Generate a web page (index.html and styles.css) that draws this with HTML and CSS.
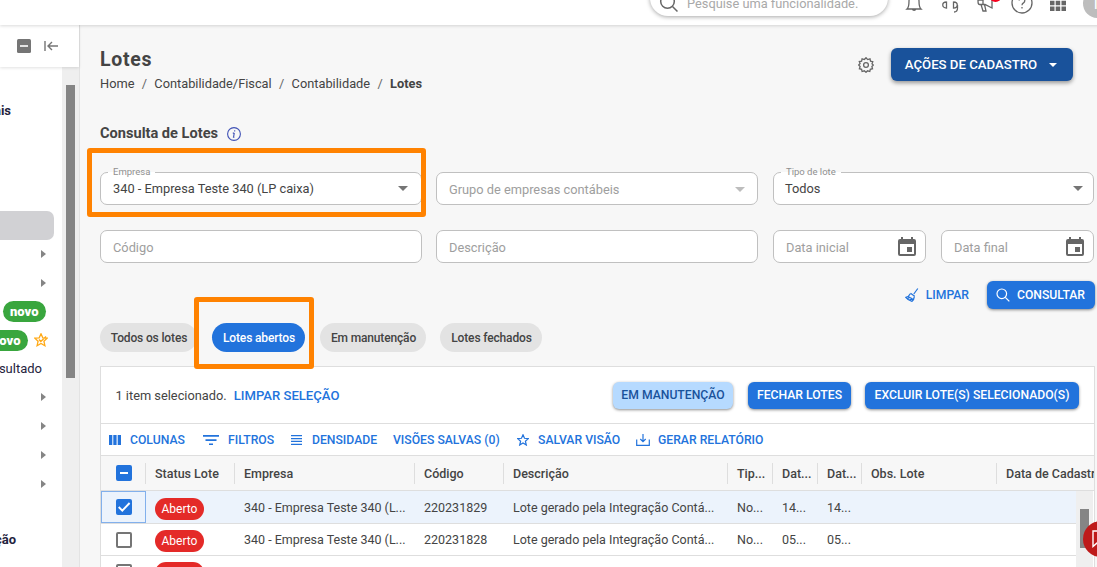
FILE: index.html
```html
<!DOCTYPE html>
<html lang="pt-BR">
  <head>
    <meta charset="UTF-8" />
    <meta name="viewport" content="width=device-width, initial-scale=1.0" />
    <title>Lotes</title>
    <link rel="stylesheet" href="styles.css">
  </head>

  <body>
    <header class="topbar">
      <div class="search">
        <svg width="20" height="20" viewBox="0 0 20 20"><circle cx="8.5" cy="8.5" r="6.8" /><path d="M13.5 13.5L18.5 18.5" /></svg>
        <span>Pesquise uma funcionalidade.</span>
      </div>
      <div class="top-icons">
        <svg width="18" height="20" viewBox="0 0 18 20"><path d="M2 16C3.800 14.500 4 12 4 8a5 5 0 0 1 10 0c0 4 .2 6.500 2 8zM7.300 16a1.900 1.900 0 0 0 3.600 0" /></svg>
        <svg width="18" height="20" viewBox="0 0 18 20"><path d="M1.500 5a7.500 7.500 0 0 1 15 0M5.500 8.500v6.500c-5 0-5-6 0-6M12.500 8.500v6.500c5 0 5-6 0-6M16.500 12v3c0 2.500-1 4-3.500 4" /></svg>
        <svg class="megaphone" width="20" height="20" viewBox="0 0 20 20"><path d="M2 7h5l9-5v13l-7-3.500H3.500C2 11.500 2 10 2 7zM7 7v4.500M5 11.500l2 6.500h3l-1.500-6.500" /><circle class="dot" cx="19.500" cy="3" r="6" /></svg>
        <svg width="22" height="22" viewBox="0 0 22 22"><circle cx="11" cy="11" r="10" /><path d="M8.200 8.500a2.800 2.800 0 1 1 4.300 2.400c-1 .6-1.500 1.200-1.500 2.300M11 15v1.600" /></svg>
        <svg class="filled" width="16" height="16" viewBox="0 0 16 16"><path d="M0 0h4.500v4.500H0zM5.700 0h4.500v4.500H5.700zM11.500 0H16v4.500h-4.500zM0 5.700h4.500v4.500H0zM5.700 5.700h4.500v4.500H5.700zM11.500 5.700H16v4.500h-4.500zM0 11.500h4.500V16H0zM5.700 11.500h4.500V16H5.700zM11.500 11.500H16V16h-4.500z" /></svg>
      </div>
      <div class="avatar">T</div>
    </header>

    <div class="layout">
      <aside class="sidebar">
        <div class="side-head">
          <svg width="14" height="14" viewBox="0 0 14 14"><rect width="14" height="14" rx="1.500" fill="#757575" /><path d="M3 7h8" stroke="#fff" stroke-width="1.600" /></svg>
          <svg width="14" height="10" viewBox="0 0 14 10"><path d="M1 0v10M14 5H4.500M8 1L4 5l4 4" fill="none" stroke="#757575" stroke-width="1.400" /></svg>
        </div>
        <div class="side-body">
          <div class="menu">
            <div class="group first">Principais</div>
            <div class="row selected"></div>
            <div class="row"><i class="arrow"></i></div>
            <div class="row"><i class="arrow"></i></div>
            <div class="row"><span class="new">novo</span></div>
            <div class="row starred">
              <span class="new">novo</span>
              <svg width="14" height="14" viewBox="0 0 14 14"><path d="M7 .8l1.800 4 4.400.4-3.300 3 1 4.500L7 10.500l-3.900 2.200 1-4.500-3.300-3 4.400-.4zM5 6.500l1.800 2L12 3.500" fill="none" stroke="#ffa916" stroke-width="1.300" /></svg>
            </div>
            <div class="row text">Resultado</div>
            <div class="row"><i class="arrow"></i></div>
            <div class="row"><i class="arrow"></i></div>
            <div class="row"><i class="arrow"></i></div>
            <div class="row"><i class="arrow"></i></div>
            <div class="group last">Produção</div>
          </div>
          <div class="track"><div class="thumb"></div></div>
        </div>
      </aside>

      <main class="content">
        <div class="page-head">
          <div>
            <h1>Lotes</h1>
            <nav class="breadcrumb">
              <span>Home</span><i>/</i><span>Contabilidade/Fiscal</span><i>/</i><span>Contabilidade</span><i>/</i><b>Lotes</b>
            </nav>
          </div>
          <div class="head-actions">
            <svg width="16" height="16" viewBox="0 0 16 16"><path d="M8 .7l1.700 1.900 2.300-.8.500 2.300 2.300.6-.8 2.200L15.400 8l-1.500 1.500.6 2.200-2.200.6-.5 2.200-2.200-.7L8 15.300l-1.700-1.500-2.200.7-.5-2.200-2.200-.6.700-2.200L.6 8l1.500-1.400-.8-2.100 2.300-.4.500-2.300 2.300.7z" /><circle cx="8" cy="8" r="2.400" /></svg>
            <button class="btn dark">AÇÕES DE CADASTRO <i class="caret white"></i></button>
          </div>
        </div>

        <h2>Consulta de Lotes
          <svg width="14" height="14" viewBox="0 0 14 14"><circle cx="7" cy="7" r="6.400" /><path d="M7.700 3.300v1.300M7.300 5.800L6.500 10.300M5.800 6.100h1.400M5.900 10.300h1.500" /></svg>
        </h2>

        <div class="fields">
          <div class="field outlined">
            <label>Empresa</label>
            <span class="value">340 - Empresa Teste 340 (LP caixa)</span>
            <i class="caret"></i>
            <div class="mark mark-field"></div>
          </div>
          <div class="field"><span>Grupo de empresas contábeis</span><i class="caret light"></i></div>
          <div class="field outlined last-col">
            <label>Tipo de lote</label>
            <span class="value">Todos</span>
            <i class="caret"></i>
          </div>
          <div class="field"><span>Código</span></div>
          <div class="field"><span>Descrição</span></div>
          <div class="dates">
            <div class="field"><span>Data inicial</span><svg width="18" height="20" viewBox="0 0 18 20"><path fill-rule="evenodd" d="M3 0h2v2h8V0h2v2h1a2 2 0 0 1 2 2v13a2 2 0 0 1-2 2H2a2 2 0 0 1-2-2V4a2 2 0 0 1 2-2h1zM2 7v10h14V7zM9 10h5v5H9z" /></svg></div>
            <div class="field"><span>Data final</span><svg width="18" height="20" viewBox="0 0 18 20"><path fill-rule="evenodd" d="M3 0h2v2h8V0h2v2h1a2 2 0 0 1 2 2v13a2 2 0 0 1-2 2H2a2 2 0 0 1-2-2V4a2 2 0 0 1 2-2h1zM2 7v10h14V7zM9 10h5v5H9z" /></svg></div>
          </div>
        </div>

        <div class="form-actions">
          <button class="link">
            <svg width="14" height="14" viewBox="0 0 14 14"><path d="M12.800 .5L8.800 6M5.500 5.200l4.200 3M5.300 5.800C4.500 7.500 2.800 9 .8 9.400c1.500 2 3.700 3.400 6.200 4 1.400-1.300 2.200-3 2.300-4.800M2.800 10.500l2-1.300M4.800 12.300l2-2.500M3.500 8.800l4.800 2.800" /></svg>
            LIMPAR
          </button>
          <button class="btn">
            <svg width="14" height="14" viewBox="0 0 14 14"><circle cx="5.800" cy="5.800" r="4.800" /><path d="M9.300 9.300L13.300 13.300" /></svg>
            CONSULTAR
          </button>
        </div>

        <div class="chips">
          <span class="chip c1">Todos os lotes</span>
          <span class="chip c2 active">Lotes abertos<i class="mark mark-chip"></i></span>
          <span class="chip c3">Em manutenção</span>
          <span class="chip c4">Lotes fechados</span>
        </div>

        <section class="card">
          <div class="selection">
            <span>1 item selecionado.</span>
            <button class="link">LIMPAR SELEÇÃO</button>
            <div class="batch">
              <button class="btn pale b1">EM MANUTENÇÃO</button>
              <button class="btn b2">FECHAR LOTES</button>
              <button class="btn b3">EXCLUIR LOTE(S) SELECIONADO(S)</button>
            </div>
          </div>

          <div class="toolbar">
            <button class="link t1"><svg class="solid" width="12" height="10" viewBox="0 0 12 10"><path d="M0 0h3.300v10H0zM4.300 0h3.300v10H4.300zM8.700 0H12v10H8.700z" /></svg>COLUNAS</button>
            <button class="link t2"><svg class="solid" width="16" height="10" viewBox="0 0 16 10"><path d="M0 0h16v1.700H0zM2.500 4.200h11v1.700h-11zM6 8.400h4V10H6z" /></svg>FILTROS</button>
            <button class="link t3"><svg class="solid" width="11" height="10" viewBox="0 0 11 10"><path d="M0 0h11v1.300H0zM0 2.900h11v1.300H0zM0 5.800h11v1.300H0zM0 8.700h11V10H0z" /></svg>DENSIDADE</button>
            <button class="link t4">VISÕES SALVAS (0)</button>
            <button class="link t5"><svg width="12" height="12" viewBox="0 0 12 12"><path d="M6 .8l1.500 3.500 3.900.3-3 2.600.9 3.800L6 9l-3.300 2 .9-3.800-3-2.600 3.900-.3z" /></svg>SALVAR VISÃO</button>
            <button class="link t6"><svg width="14" height="12" viewBox="0 0 14 12"><path d="M.7 5.500v5.800h12.600V5.500M7 0v7.500M4.300 5L7 7.700 9.700 5" /></svg>GERAR RELATÓRIO</button>
          </div>

          <div class="grid head">
            <div class="check"><i class="box some"></i></div>
            <div>Status Lote</div><div>Empresa</div><div>Código</div><div>Descrição</div>
            <div>Tip...</div><div>Dat...</div><div>Dat...</div><div>Obs. Lote</div><div>Data de Cadastro</div>
          </div>
          <div class="grid-body">
            <div class="rows">
              <div class="grid picked">
                <div class="check focus"><svg width="16" height="16" viewBox="0 0 16 16"><rect width="16" height="16" rx="2" fill="#2273dc" /><path d="M2.700 8l3.600 3.600L13.600 4" fill="none" stroke="#fff" stroke-width="1.900" /></svg></div>
                <div><span class="badge">Aberto</span></div><div>340 - Empresa Teste 340 (L...</div><div>220231829</div><div>Lote gerado pela Integração Contá...</div>
                <div>No...</div><div>14...</div><div>14...</div><div></div><div></div>
              </div>
              <div class="grid">
                <div class="check"><i class="box"></i></div>
                <div><span class="badge">Aberto</span></div><div>340 - Empresa Teste 340 (L...</div><div>220231828</div><div>Lote gerado pela Integração Contá...</div>
                <div>No...</div><div>05...</div><div>05...</div><div></div><div></div>
              </div>
              <div class="grid">
                <div class="check"><i class="box"></i></div>
                <div><span class="badge">Aberto</span></div>
              </div>
            </div>
            <div class="track"><div class="thumb"></div></div>
          </div>
        </section>
      </main>
    </div>

    <div class="chat">
      <svg width="18" height="18" viewBox="0 0 18 18"><path d="M1 1h16v12H5l-4 3.500z" /></svg>
    </div>
  </body>
</html>
```

FILE: styles.css
```css
* {
  box-sizing: border-box;
}

body {
  margin: 0;
  width: 1097px;
  height: 567px;
  overflow: hidden;
  position: relative;
  background-color: #f7f7f7;
  color: #444;
  font-family: Roboto, Arial, sans-serif;
  font-size: 12.8px;
}

i {
  font-style: normal;
}

svg {
  flex: none;
}

button {
  border: none;
  padding: 0;
  background: none;
  font-family: inherit;
  white-space: nowrap;
}

/* top bar, scrolled halfway out of the window */
.topbar {
  position: relative;
  z-index: 2;
  display: flex;
  align-items: center;
  justify-content: flex-end;
  width: 1112px;
  height: 50px;
  margin-top: -25px;
  background-color: #fff;
  box-shadow: 0 1px 3px rgba(0, 0, 0, 0.15);
}

.search {
  display: flex;
  align-items: center;
  width: 238px;
  height: 36px;
  margin-top: -4px;
  padding-left: 9px;
  border-radius: 18px;
  box-shadow: 0 1px 4px rgba(0, 0, 0, 0.35);
  color: #a9a9a9;
  font-size: 12.8px;
}

.search svg {
  margin: 9px 8px 0 0;
  fill: none;
  stroke: #666;
  stroke-width: 1.5;
}

.search span {
  margin-top: 11px;
}

.top-icons {
  display: flex;
  align-items: center;
  gap: 17.500px;
  margin: 6px 17px 0 17px;
}

.top-icons svg {
  fill: none;
  stroke: #666;
  stroke-width: 1.3;
}

.top-icons .filled {
  fill: #666;
  stroke: none;
}

.megaphone {
  margin-right: -3px;
  overflow: visible;
}

.megaphone .dot {
  fill: #f5001d;
  stroke: none;
}

.avatar {
  width: 29px;
  height: 29px;
  margin-top: 7px;
  border-radius: 50%;
  background-color: #bdbdbd;
  color: #fff;
  font-size: 16px;
  line-height: 30px;
  padding-left: 8px;
}

.layout {
  display: flex;
  height: 542px;
}

/* sidebar */
.sidebar {
  width: 80px;
  flex: none;
  display: flex;
  flex-direction: column;
  background-color: #fff;
  border-right: 1px solid #e3e3e3;
}

.side-head {
  position: relative;
  display: flex;
  align-items: center;
  gap: 13px;
  height: 42px;
  padding-left: 17px;
  box-shadow: 0 1px 3px rgba(0, 0, 0, 0.12);
}

.side-body {
  display: flex;
  flex: 1;
}

.menu {
  width: 62px;
  overflow: hidden;
  color: #1f2440;
  font-size: 13px;
}

.group {
  display: flex;
  justify-content: flex-end;
  align-items: center;
  height: 24px;
  font-weight: 700;
}

.first {
  margin: 31px 51px 89px 0;
}

.last {
  margin: 30px 46px 0 0;
}

.row {
  display: flex;
  justify-content: flex-end;
  align-items: center;
  height: 28.700px;
  padding-right: 16px;
}

.row.selected {
  margin-right: 8px;
  background-color: #d1d1d4;
  border-radius: 0 7px 7px 0;
}

.row.starred {
  padding-right: 14px;
  gap: 6px;
}

.row.text {
  padding-right: 20px;
}

.arrow {
  border: 4.500px solid transparent;
  border-left: 5px solid #858585;
  border-right: none;
}

.new {
  padding: 0 7.500px;
  border-radius: 11px;
  background-color: #39a63e;
  color: #fff;
  font-weight: 900;
  line-height: 21px;
}

.track {
  flex: none;
  width: 17px;
  padding: 18px 4px 0;
  background-color: #efefef;
}

.thumb {
  width: 9px;
  height: 293px;
  background-color: #858585;
}

/* page */
.content {
  flex: none;
  width: 1015px;
  padding: 22px 0 0 20px;
  display: flex;
  flex-direction: column;
}

.page-head {
  display: flex;
  justify-content: space-between;
  height: 60px;
  padding-right: 22px;
}

h1 {
  margin: 0;
  padding-top: 1px;
  font-size: 19.500px;
  line-height: 23px;
  letter-spacing: 0.700px;
}

.breadcrumb {
  line-height: 26px;
}

.breadcrumb i {
  margin: 0 7.300px;
  color: #666;
}

.head-actions {
  display: flex;
  gap: 17px;
  padding-top: 1px;
}

.head-actions svg {
  margin-top: 9px;
  fill: none;
  stroke: #666;
  stroke-width: 1.3;
}

.btn {
  display: flex;
  align-items: center;
  justify-content: center;
  height: 28px;
  border-radius: 6px;
  background-color: #2273dc;
  color: #fff;
  font-size: 12.2px;
  font-weight: 500;
  box-shadow: 0 1px 3px rgba(0, 0, 0, 0.45);
}

.btn.dark {
  width: 182px;
  height: 33px;
  padding-right: 2px;
  background-color: #19529b;
  font-size: 13.2px;
  box-shadow: 0 2px 4px rgba(0, 0, 0, 0.4);
}

.btn.dark .caret {
  margin-left: 12px;
}

.btn.pale {
  background-color: #b6daff;
  color: #19529b;
}

.caret {
  flex: none;
  border: 5px solid transparent;
  border-top-color: #757575;
  border-bottom: none;
}

.caret.light {
  border-top-color: #bdbdbd;
}

.caret.white {
  border-width: 4px;
  border-bottom: none;
  border-top-color: #fff;
}

h2 {
  display: flex;
  align-items: center;
  gap: 9px;
  height: 20px;
  margin: 16px 0 29px;
  font-size: 14.600px;
}

h2 svg {
  margin-top: 2px;
  fill: none;
  stroke: #3f51b5;
  stroke-width: 1.1;
}

.fields {
  display: grid;
  grid-template-columns: 322px 322px 1fr;
  gap: 25px 14px;
  width: 994px;
}

.field {
  position: relative;
  display: flex;
  align-items: center;
  justify-content: space-between;
  height: 33px;
  padding: 1px 12px 0 12px;
  border: 1px solid #c0c0c0;
  border-radius: 7px;
  background-color: #fff;
  color: #9e9e9e;
}

.field .value {
  color: #444;
}

/* floating label cuts the top border */
.field label {
  position: absolute;
  left: 7px;
  top: -7px;
  padding: 0 5px;
  color: #8f8f8f;
  font-size: 9.500px;
  line-height: 12px;
  background: linear-gradient(#f7f7f7 50%, #fff 50%);
}

.field.outlined {
  padding-top: 0;
  padding-right: 13px;
}

.fields > .last-col,
.fields > .dates {
  margin-left: 1px;
}

.field.last-col {
  padding-right: 10px;
  padding-left: 11px;
}

.dates {
  display: grid;
  grid-template-columns: 1fr 1fr;
  gap: 15px;
}

.dates .field {
  padding-right: 9px;
  padding-top: 0;
}

.dates .field span {
  margin-top: 1px;
}

.dates svg {
  fill: #666;
}

/* highlight frames */
.mark {
  position: absolute;
  z-index: 3;
  border: 5px solid #ff8200;
  border-radius: 3px;
}

.mark-field {
  left: -14px;
  top: -25px;
  width: 339px;
  height: 69px;
}

.mark-chip {
  left: -18px;
  top: -26px;
  width: 120px;
  height: 72px;
}

.link {
  display: flex;
  align-items: center;
  color: #2273dc;
  font-size: 12.2px;
  font-weight: 500;
}

.link svg,
.form-actions svg {
  fill: none;
  stroke: currentColor;
  stroke-width: 1.2;
}

.link .solid {
  fill: currentColor;
  stroke: none;
}

.form-actions {
  display: flex;
  justify-content: flex-end;
  gap: 18px;
  margin-top: 18px;
  height: 28px;
}

.form-actions svg {
  margin-right: 7px;
}

.form-actions .btn {
  width: 108px;
  padding-right: 1px;
}

.chips {
  display: flex;
  gap: 15px;
  margin-top: 14px;
}

.chip {
  position: relative;
  height: 29px;
  padding-left: 1px;
  border-radius: 15px;
  background-color: #e3e3e3;
  font-size: 12px;
  font-weight: 500;
  letter-spacing: -0.15px;
  line-height: 30px;
  text-align: center;
  white-space: nowrap;
}

.chip.active {
  background-color: #2273dc;
  color: #fff;
}

.c1 { width: 97px; }
.c2 { width: 93px; }
.c3 { width: 106px; }
.c4 { width: 102px; margin-left: -1px; }

/* table */
.card {
  flex: 1;
  display: flex;
  flex-direction: column;
  min-height: 0;
  margin-top: 14px;
  border: 1px solid #dedede;
  border-bottom: none;
  background-color: #fff;
}

.selection {
  display: flex;
  align-items: center;
  flex: none;
  gap: 7px;
  height: 57px;
  padding: 0 15px 0 14.500px;
  border-bottom: 1px solid #dedede;
}

.selection .link {
  font-size: 13.1px;
}

.batch {
  display: flex;
  gap: 14px;
  margin-left: auto;
}

.batch .btn {
  height: 27px;
}

.b1 { width: 120px; margin-right: 1px; }
.b2 { width: 103px; }
.b3 { width: 214px; }

.toolbar {
  display: flex;
  flex: none;
  height: 32px;
  padding-left: 8px;
  border-bottom: 1px solid #dedede;
}

.t1 { width: 94px; gap: 9px; }
.t2 { width: 88px; gap: 9px; }
.t3 { width: 102px; gap: 10px; }
.t4 { width: 124px; }
.t5 { width: 119px; gap: 9px; }
.t6 { gap: 8px; }

.grid {
  display: grid;
  grid-template-columns: 45px 89px 180px 89px 224px 45px 45px 44px 135px 1fr;
  height: 32px;
  border-bottom: 1px solid #dedede;
  font-size: 12.500px;
}

.grid > div {
  display: flex;
  align-items: center;
  padding-left: 9px;
  white-space: nowrap;
  overflow: hidden;
}

.grid > .check {
  padding-left: 15px;
}

.head {
  flex: none;
  height: 35px;
  align-items: center;
  background-color: #f7f7f7;
  font-weight: 500;
}

.head > div {
  height: 21px;
  border-right: 1px solid #dedede;
}

.head > div:last-child {
  border-right: none;
}

.grid-body {
  display: flex;
  flex: 1;
  min-height: 0;
  margin-right: 1px;
}

.rows {
  flex: 1;
}

.picked {
  height: 33px;
  background-color: #ecf3fc;
}

.grid > .focus {
  padding-left: 14px;
  border: 1px solid #82b0ec;
}

.box {
  width: 16px;
  height: 16px;
  border: 2px solid #757575;
  border-radius: 2px;
}

.box.some {
  border: 7px solid #2273dc;
  border-width: 7px 4px;
  background-color: #fff;
}

.badge {
  margin-top: 3px;
  width: 49px;
  border-radius: 11px;
  background-color: #e42a28;
  color: #fff;
  font-size: 12px;
  line-height: 22px;
  text-align: center;
}

.grid-body .thumb {
  height: 39px;
}

/* support bubble */
.chat {
  position: absolute;
  z-index: 4;
  left: 1083px;
  top: 521px;
  width: 36px;
  height: 36px;
  padding: 9px;
  border-radius: 50%;
  background-color: #be1a1a;
}

.chat svg {
  fill: none;
  stroke: #fff;
  stroke-width: 1.4;
}
```
